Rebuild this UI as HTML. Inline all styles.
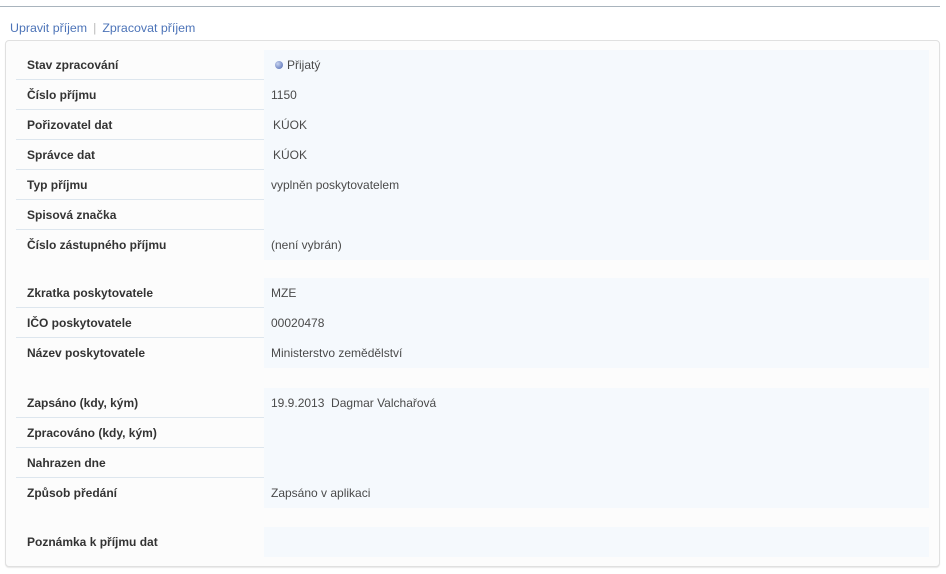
<!DOCTYPE html>
<html><head><meta charset="utf-8"><style>
body{margin:0;background:#fff;font-family:"Liberation Sans",Arial,sans-serif;font-size:12px;color:#333;width:946px;height:574px;overflow:hidden;position:relative}
.top{position:absolute;left:0;top:6px;width:940px;height:1px;background:#a9b4bd}
.links{position:absolute;left:10px;top:21px;color:#4d74b8;font-size:12.4px}
.links .sep{color:#bbb;margin:0 6px}
.panel{position:absolute;left:5px;top:40px;width:933px;height:525px;border:1px solid #e0e0e0;border-radius:4px;background:#fcfcfc;box-shadow:0 1px 1px #e8e8e8}
.row{position:absolute;left:16px;width:913px;height:30px}
.row .l{position:absolute;left:11px;top:8px;font-weight:bold;color:#333}
.row .v{position:absolute;left:248px;top:0;width:665px;height:30px;background:#f5f9fd}
.row .v span{position:absolute;left:7px;top:8px;color:#4a4a4a}
.row.b{border-bottom:1px solid #dde6ee;height:29px}
.dot{display:inline-block;width:8px;height:8px;border-radius:50%;background:radial-gradient(circle at 35% 35%,#c8d4f0,#4a64b0);margin-right:4px;vertical-align:0}
</style></head><body>
<div class="top"></div>
<div class="links">Upravit příjem<span class="sep">|</span>Zpracovat příjem</div>
<div class="panel"></div>
<div class="row b" style="top:50px"><div class="l">Stav zpracování</div><div class="v"><span style="left:11px"><i class="dot"></i>Přijatý</span></div></div>
<div class="row b" style="top:80px"><div class="l">Číslo příjmu</div><div class="v"><span>1150</span></div></div>
<div class="row b" style="top:110px"><div class="l">Pořizovatel dat</div><div class="v"><span style="left:9px">KÚOK</span></div></div>
<div class="row b" style="top:140px"><div class="l">Správce dat</div><div class="v"><span style="left:9px">KÚOK</span></div></div>
<div class="row b" style="top:170px"><div class="l">Typ příjmu</div><div class="v"><span>vyplněn poskytovatelem</span></div></div>
<div class="row b" style="top:200px"><div class="l">Spisová značka</div><div class="v"></div></div>
<div class="row" style="top:230px"><div class="l">Číslo zástupného příjmu</div><div class="v"><span>(není vybrán)</span></div></div>
<div class="row b" style="top:278px"><div class="l">Zkratka poskytovatele</div><div class="v"><span>MZE</span></div></div>
<div class="row b" style="top:308px"><div class="l">IČO poskytovatele</div><div class="v"><span>00020478</span></div></div>
<div class="row" style="top:338px"><div class="l">Název poskytovatele</div><div class="v"><span>Ministerstvo zemědělství</span></div></div>
<div class="row b" style="top:388px"><div class="l">Zapsáno (kdy, kým)</div><div class="v"><span>19.9.2013&nbsp; Dagmar Valchařová</span></div></div>
<div class="row b" style="top:418px"><div class="l">Zpracováno (kdy, kým)</div><div class="v"></div></div>
<div class="row b" style="top:448px"><div class="l">Nahrazen dne</div><div class="v"></div></div>
<div class="row" style="top:478px"><div class="l">Způsob předání</div><div class="v"><span>Zapsáno v aplikaci</span></div></div>
<div class="row" style="top:527px"><div class="l">Poznámka k příjmu dat</div><div class="v"></div></div>
</body></html>
